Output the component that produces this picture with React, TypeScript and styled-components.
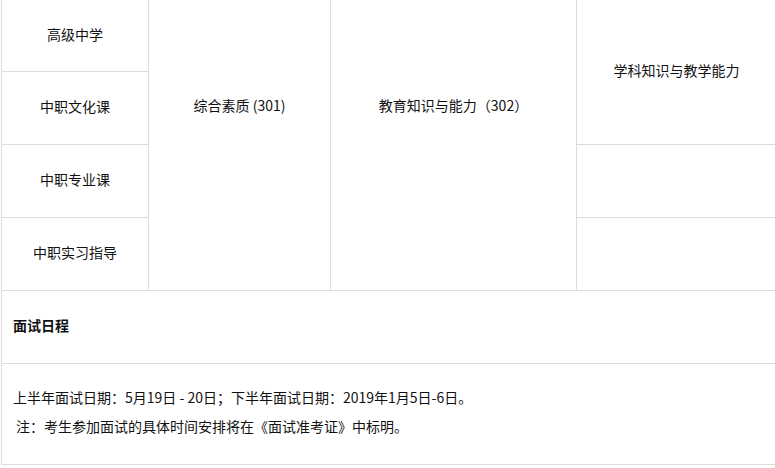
import React from 'react'
import styled, { createGlobalStyle } from 'styled-components'

const levels = ['高级中学', '中职文化课', '中职专业课', '中职实习指导']

const App = () => {
  return (
    <>
      <GlobalStyle />
      <Page>
        <Grid>
          {levels.map((name, i) => (
            <Cell key={name} style={{ gridRow: i + 1, gridColumn: 1 }}>
              {name}
            </Cell>
          ))}
          <Cell high style={{ gridRow: '1 / span 4', gridColumn: 2 }}>
            综合素质 (301)
          </Cell>
          <Cell high style={{ gridRow: '1 / span 4', gridColumn: 3 }}>
            教育知识与能力（302）
          </Cell>
          <Cell style={{ gridRow: '1 / span 2', gridColumn: 4 }}>学科知识与教学能力</Cell>
          <Cell style={{ gridRow: 3, gridColumn: 4 }} />
          <Cell style={{ gridRow: 4, gridColumn: 4 }} />
          <WideCell bold>面试日程</WideCell>
          <WideCell>
            <Note>上半年面试日期：5月19日 - 20日；下半年面试日期：2019年1月5日-6日。</Note>
            <Note indent>注：考生参加面试的具体时间安排将在《面试准考证》中标明。</Note>
          </WideCell>
        </Grid>
      </Page>
    </>
  )
}

const GlobalStyle = createGlobalStyle`
  html, body {
    margin: 0;
    padding: 0;
    background: #fff;
    overflow: hidden;
  }
  body {
    font-family: 'Noto Sans CJK SC', 'Noto Sans', sans-serif;
    font-size: 14px;
    color: #111;
  }
`
const Page = styled.div`
  width: 775px;
  height: 468px;
  padding-left: 1px;
  overflow: hidden;
`
const Grid = styled.div`
  display: grid;
  grid-template-columns: 147px 182px 246px 200px;
  grid-template-rows: 72px 73px 73px 73px 73px 101px;
  width: 776px;
  border-left: 1px solid #dcdcdc;
`
// tall merged cells keep their label up in the first three rows
const Cell = styled.div<{ high?: boolean }>`
  box-sizing: border-box;
  display: flex;
  align-items: center;
  justify-content: center;
  text-align: center;
  padding-bottom: ${(p) => (p.high ? '80px' : '4px')};
  border-right: 1px solid #dcdcdc;
  border-bottom: 1px solid #dcdcdc;
  line-height: 20px;
`
const WideCell = styled.div<{ bold?: boolean }>`
  box-sizing: border-box;
  grid-column: 1 / -1;
  display: flex;
  flex-direction: column;
  justify-content: center;
  padding: 0 11px 4px;
  border-bottom: 1px solid #dcdcdc;
  font-weight: ${(p) => (p.bold ? 700 : 400)};
  line-height: 29px;
`
const Note = styled.div<{ indent?: boolean }>`
  padding-left: ${(p) => (p.indent ? '3px' : '0')};
`

export default App
